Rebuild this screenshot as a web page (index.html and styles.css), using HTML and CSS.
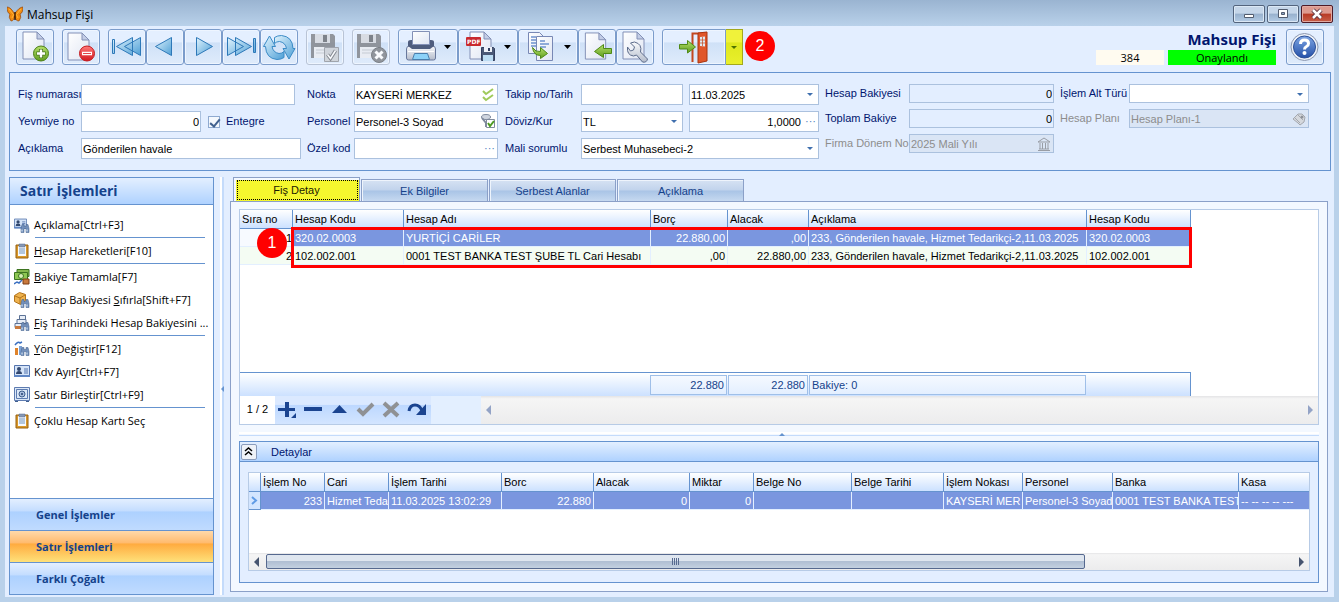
FILE: index.html
```
<!DOCTYPE html>
<html lang="tr">
<head>
    <meta charset="UTF-8">
    <meta name="viewport" content="width=device-width, initial-scale=1.0">
    <title>Mahsup Fişi</title>
    <link rel="stylesheet" href="styles.css">
</head>
<body>
    <!-- shared gradients and symbols -->
    <svg class="defs" width="0" height="0">
        <defs>
            <linearGradient id="gBlue" x1="0" y1="0" x2="1" y2="1"><stop offset="0" stop-color="#e2f4fd"/><stop offset="1" stop-color="#4d9fd6"/></linearGradient>
            <linearGradient id="gPage" x1="0" y1="0" x2="1" y2="1"><stop offset="0" stop-color="#ffffff"/><stop offset="1" stop-color="#dfe5f3"/></linearGradient>
            <linearGradient id="gGreen" x1="0" y1="0" x2="0" y2="1"><stop offset="0" stop-color="#b5e06a"/><stop offset="1" stop-color="#5f9d1e"/></linearGradient>
            <linearGradient id="gRed" x1="0" y1="0" x2="0" y2="1"><stop offset="0" stop-color="#ff7a7a"/><stop offset="1" stop-color="#d3181f"/></linearGradient>
            <linearGradient id="gHelp" x1="0" y1="0" x2="0" y2="1"><stop offset="0" stop-color="#7ea6e4"/><stop offset="1" stop-color="#2450a8"/></linearGradient>
            <linearGradient id="gGrey" x1="0" y1="0" x2="0" y2="1"><stop offset="0" stop-color="#fafbfd"/><stop offset="1" stop-color="#b4bccb"/></linearGradient>
            <symbol id="page" viewBox="0 0 24 30">
                <path d="M1 1h14l7 7v20H1z" fill="url(#gPage)" stroke="#8390b6"/>
                <path d="M15 1v7h7z" fill="#c3cde6" stroke="#8390b6"/>
            </symbol>
            <symbol id="disk" viewBox="0 0 24 24">
                <path d="M0 0h22l2 2v22H0z" fill="#84878d"/>
                <path d="M4 0h15v9H4z" fill="#d6d9df"/><path d="M12 1h4v7h-4z" fill="#6c6f76"/>
                <path d="M3 13h18v11H3z" fill="#eceef2"/><path d="M5 16h14M5 19h14" stroke="#c3c7ce"/>
            </symbol>
            <symbol id="clip" viewBox="0 0 16 16">
                <path d="M2 2h12v13H2z" fill="#d9982a" stroke="#98600f"/>
                <path d="M4 3h8v10H4z" fill="#f7fafe"/><path d="M5 1h6v3H5z" fill="#8698b5" stroke="#576a8d" stroke-width=".5"/>
                <path d="M5 6h6M5 8h6M5 10h6" stroke="#6f92bb"/>
            </symbol>
            <symbol id="bino" viewBox="0 0 10 8">
                <path d="M1 4 2 0h2v2h2V0h2l1 4v4H6V4H4v4H1z" fill="#7390bb" stroke="#3f5c88" stroke-width=".5"/>
                <path d="M2 5v2M7 5v2" stroke="#e3eefa"/>
            </symbol>
            <symbol id="card" viewBox="0 0 16 12">
                <path d="M.5.5h15v11H.5z" fill="#d5e4f8" stroke="#5474ad"/>
                <path d="M0 10h16v2H0z" fill="#5f86c4"/>
                <circle cx="5" cy="4" r="2" fill="#32486f"/><path d="M2 9q0-3 3-3t3 3z" fill="#32486f"/><path d="M10 4h4M10 6h4M10 8h4" stroke="#5474ad"/>
            </symbol>
        </defs>
    </svg>

    <header class="titlebar">
        <svg class="logo" width="16" height="16" viewBox="0 0 16 16">
            <path d="M7.500 8Q4 1 0 1q0 6 3 7-2 3 1 7 3 0 3.500-5 1 5 4.500 5 3-4 1-7 3-1 3-7-4 0-8.500 7z" fill="#f28c0f" stroke="#92430a" stroke-width=".7"/>
            <path d="M2 3l4 5M14 3l-4 5M5 12l2-4M11 12 9 8" stroke="#ffb53b"/><path d="M8 6v8" stroke="#3b1d05" stroke-width="1.500"/>
        </svg>
        <span class="caption">Mahsup Fişi</span>
        <button class="win" aria-label="Küçült"><svg width="30" height="16" viewBox="0 0 30 16"><path d="M10.500 8.500h9v3h-9z" fill="#fff" stroke="#525c6e"/></svg></button>
        <button class="win" aria-label="Büyüt"><svg width="30" height="16" viewBox="0 0 30 16"><path d="M10.500 3.500h9v8h-9z" fill="#fff" stroke="#525c6e"/><path d="M13.500 6.500h3v2h-3z" fill="#8fa6c4" stroke="#525c6e"/></svg></button>
        <button class="win close" aria-label="Kapat"><svg width="30" height="16" viewBox="0 0 30 16"><path d="M11 4l8 8M19 4l-8 8" stroke="#5b3440" stroke-width="4.500"/><path d="M11 4l8 8M19 4l-8 8" stroke="#fff" stroke-width="2.500"/></svg></button>
    </header>

    <div class="window">
        <div class="toolbar">
            <button class="tool" aria-label="Yeni"><svg viewBox="1 1 36 34"><use href="#page" x="6" y="2" width="24" height="30"/><circle cx="25" cy="24.500" r="7.500" fill="url(#gGreen)" stroke="#4c7f17"/><path d="M25 20v9M20.500 24.500h9" stroke="#3f6d13" stroke-width="4"/><path d="M25 20.500v8M21 24.500h8" stroke="#fff" stroke-width="2.500"/></svg></button>
            <button class="tool" aria-label="Sil"><svg viewBox="1 1 36 34"><use href="#page" x="5" y="3" width="24" height="30"/><circle cx="25" cy="24.500" r="7.500" fill="url(#gRed)" stroke="#c41b20"/><path d="M20 24.500h10" stroke="#fff" stroke-width="3.500"/><path d="M21 24.500h8" stroke="#e0474b"/></svg></button>
            <div class="group">
                <button class="tool" aria-label="İlk"><svg viewBox="1 1 36 34"><path d="M4.500 10.500h2v14h-2zM24.500 8.500v18l-16-9zM32.500 8.500v18l-16-9z" fill="url(#gBlue)" stroke="#2d78b8"/></svg></button>
                <button class="tool" aria-label="Önceki"><svg viewBox="1 1 36 34"><path d="M25.500 8.500v18l-16-9z" fill="url(#gBlue)" stroke="#2d78b8"/></svg></button>
                <button class="tool" aria-label="Sonraki"><svg viewBox="1 1 36 34"><path d="M12.500 8.500v18l16-9z" fill="url(#gBlue)" stroke="#2d78b8"/></svg></button>
                <button class="tool" aria-label="Son"><svg viewBox="1 1 36 34"><path d="M5.500 8.500v18l16-9zM13.500 8.500v18l16-9zM31.500 9.500h2v14h-2z" fill="url(#gBlue)" stroke="#2d78b8"/></svg></button>
                <button class="tool" aria-label="Yenile"><svg viewBox="1 1 36 34">
                    <path d="M3.500 17.500 9.500 7l6 10.500h-3.500q1 6 7 7 3 0 5-2v6q-3 2-7 2-11-1-11.500-13z" fill="url(#gBlue)" stroke="#3b8bc6"/>
                    <path d="M35 19.500 29 30l-6-10.500h3.500q-1-6-7-7-3 0-5 2V8.500q3-2 7-2 11 1 11.500 13z" fill="url(#gBlue)" stroke="#3b8bc6"/></svg></button>
            </div>
            <button class="tool off" aria-label="Kaydet" disabled><svg viewBox="1 1 36 34"><use href="#disk" x="5" y="5" width="24" height="24"/><path d="M18.500 18.500h14v14h-14z" fill="#cfd2d6" stroke="#96999f"/><path d="m21.500 25.500 3 4 5-8" fill="none" stroke="#777a80" stroke-width="3.500"/><path d="m21.500 25.500 3 4 5-8" fill="none" stroke="#fff" stroke-width="1.500"/></svg></button>
            <button class="tool off" aria-label="Vazgeç" disabled><svg viewBox="1 1 36 34"><use href="#disk" x="5" y="5" width="24" height="24"/><circle cx="27" cy="26" r="7.500" fill="#85888d" stroke="#6b6e73"/><path d="m23.500 22.500 7 7m0-7-7 7" stroke="#fff" stroke-width="3"/></svg></button>
            <div class="group">
                <button class="tool wide" aria-label="Yazdır"><svg viewBox="1 1 58 34">
                    <path d="M8.500 20q0-3 3-3h23q3 0 3 3v9q0 2-2 2h-25q-2 0-2-2z" fill="url(#gGrey)" stroke="#68789c"/>
                    <path d="M10 17v-4q0-2 3-2h20q3 0 3 2v4l-4 3H14z" fill="#4f5d7e"/>
                    <path d="M14.500 2.500h17v13h-17z" fill="url(#gPage)" stroke="#8390b6"/><path d="M10 22.500h26" stroke="#fff"/>
                    <path d="M16.500 24.500h13l2 6h-17z" fill="#8cd2f8" stroke="#497eac"/>
                    <path d="M46 16h7l-3.500 4z"/></svg></button>
                <button class="tool wide" aria-label="PDF"><svg viewBox="1 1 58 34">
                    <use href="#page" x="11" y="2" width="24" height="30"/>
                    <rect x="8" y="8" width="15" height="9" rx="1" fill="#c92a2d"/><text x="9" y="15" class="pdf">PDF</text>
                    <path d="M23.500 18.500h12l1 1v12h-13z" fill="#4a5876" stroke="#334061"/><path d="M26 18h8v5h-8z" fill="#eef2f9"/><path d="M31 19v3" stroke="#334061" stroke-width="2"/><path d="M25 26h10v6H25z" fill="#bcdcf3"/>
                    <path d="M46 16h7l-3.500 4z"/></svg></button>
                <button class="tool wide" aria-label="Kopyala"><svg viewBox="1 1 58 34">
                    <path d="M10.500 3.500h11l4 4v17h-15z" fill="url(#gPage)" stroke="#7888b5"/><path d="M13 8h5M13 11h8M13 14h5M13 17h5" stroke="#6f93ce" stroke-width="1.500"/>
                    <path d="M18.500 7.500h16v24h-16z" fill="url(#gPage)" stroke="#7888b5"/><path d="M22 12h5M22 15h9M22 18h6" stroke="#6f93ce" stroke-width="1.500"/>
                    <path d="M14.500 18.500q3 5 8 4v-4l7 6-7 5v-3q-7 0-8-8z" fill="url(#gGreen)" stroke="#4f8a16"/>
                    <path d="M46 16h7l-3.500 4z"/></svg></button>
                <button class="tool" aria-label="Aktar"><svg viewBox="1 1 36 34"><use href="#page" x="6" y="3" width="24" height="29"/><path d="M33.500 19.500h-8v-4l-9 7 9 6v-4h8z" fill="url(#gGreen)" stroke="#4f8a16"/></svg></button>
                <button class="tool" aria-label="Ayarlar"><svg viewBox="1 1 36 34"><use href="#page" x="6" y="2" width="24" height="30"/><path d="M14.500 14l4 4-1 3-3 1-3-4q-1 8 6 9l3-1 6 7q4 1 5-3l-7-7q2-8-6-10z" fill="url(#gGrey)" stroke="#5d6c8b"/></svg></button>
            </div>
            <div class="split">
                <button class="tool exit" aria-label="Çıkış"><svg viewBox="1 1 62 34">
                    <path d="M30.500 33V4.500h14" fill="none" stroke="#c2471f" stroke-width="2"/>
                    <path d="M36 4l9-1v29l-9 2z" fill="#e0562a" stroke="#a9340f"/><path d="M38 8l5-.500v10l-5-.500z" fill="#dfeaf2"/><path d="M40.500 8v9M38 11h5M38 14h5" stroke="#c2471f" stroke-width=".7"/>
                    <path d="M17.500 15.500h8v-4l8 6.500-8 6v-4h-8z" fill="url(#gGreen)" stroke="#4f8a16"/></svg></button>
                <button class="tool drop" aria-label="Çıkış seçenekleri"><svg viewBox="0 0 16 34"><path d="M5 16h6l-3 3z" fill="#4f7300"/></svg></button>
                <span class="badge">2</span>
            </div>
            <div class="status">
                <h1>Mahsup Fişi</h1>
                <div class="pills"><span class="num">384</span><span class="ok">Onaylandı</span></div>
            </div>
            <button class="tool" aria-label="Yardım"><svg viewBox="1 1 36 34"><circle cx="18.500" cy="18" r="13.500" fill="#eef2f8" stroke="#8a97b0"/><circle cx="18.500" cy="18" r="11" fill="url(#gHelp)" stroke="#2d4f96"/><path d="M14.500 15q0-4 4-4t4 3.500q0 2-2 3t-2 3" fill="none" stroke="#fff" stroke-width="3"/><circle cx="18.500" cy="24" r="2" fill="#fff"/></svg></button>
        </div>

        <form class="panel" onsubmit="return false">
            <div class="col c1">
                <div class="row"><label for="fisNo">Fiş numarası</label><input class="w214" type="text" id="fisNo"></div>
                <div class="row"><label for="yevmiye">Yevmiye no</label><input class="w120 right" type="text" id="yevmiye" value="0"><input type="checkbox" id="entegre" checked><label class="auto" for="entegre">Entegre</label></div>
                <div class="row"><label for="aciklama">Açıklama</label><input type="text" id="aciklama" value="Gönderilen havale"></div>
            </div>
            <div class="col c2">
                <div class="row"><label for="nokta">Nokta</label><div class="box"><input type="text" id="nokta" value="KAYSERİ MERKEZ"><svg class="ic" width="14" height="16" viewBox="0 0 14 16"><path d="m2 4 3 3 7-5M2 10l3 3 7-5" fill="none" stroke="#9fca5a" stroke-width="2"/></svg></div></div>
                <div class="row"><label for="personel">Personel</label><div class="box"><input type="text" id="personel" value="Personel-3 Soyad"><svg class="ic" width="14" height="14" viewBox="0 0 14 14"><ellipse cx="5" cy="3" rx="4.500" ry="2.500" fill="#cfd5df" stroke="#7f8a9d"/><path d="m1 4 4 5v4" fill="none" stroke="#7f8a9d" stroke-width="2"/><path d="M5.500 5.500h8v8h-8z" fill="#fff" stroke="#7f8a9d"/><path d="m7 9 2 3 4-5" fill="none" stroke="#4d9b21" stroke-width="2"/></svg></div></div>
                <div class="row"><label for="ozelKod">Özel kod</label><div class="box"><input type="text" id="ozelKod"><button class="dots" aria-label="Seç">···</button></div></div>
            </div>
            <div class="col c3">
                <div class="row"><label for="takip">Takip no/Tarih</label><input class="w102" type="text" id="takip"><div class="box arrow"><select id="tarih" aria-label="Tarih"><option>11.03.2025</option></select></div></div>
                <div class="row"><label for="doviz">Döviz/Kur</label><div class="box arrow w102"><select id="doviz"><option>TL</option></select></div><div class="box"><input class="right kur" type="text" id="kur" aria-label="Kur" value="1,0000"><button class="dots" aria-label="Seç">···</button></div></div>
                <div class="row"><label for="mali">Mali sorumlu</label><div class="box arrow"><select id="mali"><option>Serbest Muhasebeci-2</option></select></div></div>
            </div>
            <div class="col c4 low">
                <div class="row"><label for="hesapBak">Hesap Bakiyesi</label><input class="right ro" type="text" id="hesapBak" value="0" readonly></div>
                <div class="row"><label for="toplamBak">Toplam Bakiye</label><input class="right ro" type="text" id="toplamBak" value="0" readonly></div>
                <div class="row dim"><label for="donem">Firma Dönem No</label><div class="box"><input type="text" id="donem" value="2025 Mali Yılı" disabled><svg class="ic" width="14" height="14" viewBox="0 0 14 14"><path d="M1 5h12L7 1zM2 12h10M1 13.500h12M3 6v6M5.500 6v6M8.500 6v6M11 6v6" fill="none" stroke="#999da5"/></svg></div></div>
            </div>
            <div class="col c5 low">
                <div class="row"><label for="altTur">İşlem Alt Türü</label><div class="box arrow"><select id="altTur"><option></option></select></div></div>
                <div class="row dim"><label for="plan">Hesap Planı</label><div class="box"><input type="text" id="plan" value="Hesap Planı-1" disabled><svg class="ic" width="14" height="14" viewBox="0 0 14 14"><path d="m1 7 5-5h4l3 3-1 5-4 3-2-2z" fill="#d5d8dd" stroke="#a3a7ae"/><path d="m3 6 5 5M6 3l5 5" stroke="#a3a7ae"/><circle cx="10" cy="5" r="1.500" fill="#8d9198"/></svg></div></div>
            </div>
        </form>

        <div class="content">
            <aside class="side">
                <h2>Satır İşlemleri</h2>
                <nav>
                    <a href="#" class="end"><svg viewBox="0 0 16 16"><use href="#card" width="13" height="13"/><use href="#bino" x="6" y="7" width="10" height="9"/></svg><span>Açıklama[Ctrl+F3]</span></a>
                    <a href="#" class="end"><svg viewBox="0 0 16 16"><use href="#clip" width="16" height="16"/></svg><span><u>H</u>esap Hareketleri[F10]</span></a>
                    <a href="#"><svg viewBox="0 0 16 16"><path d="M3 .5h12v7H3z" fill="#86b94e" stroke="#3d7420"/><path d="M.5 3.500h13v7H.5z" fill="#8ec852" stroke="#3d7420"/><circle cx="7" cy="7" r="2.500" fill="#d9efb5" stroke="#3d7420"/><path d="m0 15 3-2 2 1 3-3" fill="none" stroke="#3a6fc0" stroke-width="1.500"/><path d="M9 10h6v5H9z" fill="#c9793c" stroke="#7c3d14"/></svg><span><u>B</u>akiye Tamamla[F7]</span></a>
                    <a href="#"><svg viewBox="0 0 16 16"><path d="m.5 3.500 5-3 6 2v6l-5 4-6-3z" fill="#eeb24d" stroke="#b4741b"/><path d="m1 4 5 2 5-3M6 6v6" fill="none" stroke="#b4741b"/><use href="#bino" x="6" y="7" width="10" height="9"/></svg><span>Hesap Bakiyesi <u>S</u>ıfırla[Shift+F7]</span></a>
                    <a href="#"><svg viewBox="0 0 16 16"><path d="M5.500.5h6v4h-6zM3 4.500h9v4H3zM1 8.500h8v4H1z" fill="#e8eef7" stroke="#5d7396"/><path d="M1 11h6v3H1z" fill="#c9793c"/><use href="#bino" x="6" y="7" width="10" height="9"/></svg><span><u>F</u>iş Tarihindeki Hesap Bakiyesini ...</span></a>
                    <a href="#" class="end gap"><svg viewBox="0 0 16 16"><path d="M1 4q3-4 5-2l2-1" fill="none" stroke="#3a6fc0" stroke-width="1.500"/><path d="M1 7h3v7H1z" fill="#e0832a"/><path d="M5 5h3v9H5z" fill="#7ba1d3"/><use href="#bino" x="6" y="6" width="10" height="9"/></svg><span><u>Y</u>ön Değiştir[F12]</span></a>
                    <a href="#"><svg viewBox="0 0 16 16"><use href="#card" y="1" width="16" height="12"/></svg><span>Kdv Ayır[Ctrl+F7]</span></a>
                    <a href="#" class="end"><svg viewBox="0 0 16 16"><path d="M.5.5h15v13H.5zM2.500 2.500h11v9h-11z" fill="#dce8f7" stroke="#5d7bb0"/><circle cx="8" cy="7" r="3" fill="#a9bddd" stroke="#41608f"/><circle cx="8" cy="7" r="1" fill="#23406f"/><path d="M1 14.500h3M12 14.500h3" stroke="#41608f"/></svg><span>Satır Birleştir[Ctrl+F9]</span></a>
                    <a href="#"><svg viewBox="0 0 16 16"><use href="#clip" width="16" height="16"/></svg><span>Çoklu Hesap Kartı Seç</span></a>
                </nav>
                <button class="grp">Genel İşlemler</button>
                <button class="grp active">Satır İşlemleri</button>
                <button class="grp">Farklı Çoğalt</button>
            </aside>
            <div class="vsplit"></div>

            <main>
                <div class="tabs">
                    <button class="tab active">Fiş Detay</button>
                    <button class="tab">Ek Bilgiler</button>
                    <button class="tab">Serbest Alanlar</button>
                    <button class="tab">Açıklama</button>
                </div>
                <div class="tabpage">
                    <section class="grid">
                        <div class="rows">
                            <table class="lines">
                                <colgroup><col class="k1"><col class="k2"><col class="k3"><col class="k4"><col class="k5"><col class="k6"><col class="k7"></colgroup>
                                <thead><tr><th>Sıra no</th><th>Hesap Kodu</th><th>Hesap Adı</th><th>Borç</th><th>Alacak</th><th>Açıklama</th><th>Hesap Kodu</th></tr></thead>
                                <tbody>
                                    <tr class="sel"><td class="r no">1</td><td>320.02.0003</td><td>YURTİÇİ CARİLER</td><td class="r">22.880,00</td><td class="r">,00</td><td>233, Gönderilen havale, Hizmet Tedarikçi-2,11.03.2025</td><td>320.02.0003</td></tr>
                                    <tr class="alt"><td class="r no">2</td><td>102.002.001</td><td>0001 TEST BANKA TEST ŞUBE TL Cari Hesabı</td><td class="r">,00</td><td class="r">22.880,00</td><td>233, Gönderilen havale, Hizmet Tedarikçi-2,11.03.2025</td><td>102.002.001</td></tr>
                                </tbody>
                            </table>
                            <div class="marker"></div>
                            <span class="badge one">1</span>
                        </div>
                        <div class="totals"><span class="t1">22.880</span><span class="t2">22.880</span><span class="t3">Bakiye: 0</span></div>
                        <div class="navrow">
                            <span class="pos">1 / 2</span>
                            <div class="nav">
                                <button aria-label="Ekle"><svg viewBox="0 0 26 26"><path d="M10 5h4v6h6v3h-6v6h-4v-6H3v-3h7zM21 16v5h-5z" fill="#1b4490"/></svg></button>
                                <button aria-label="Çıkar"><svg viewBox="0 0 26 26"><path d="M3 10h18v4H3z" fill="#1b4490"/></svg></button>
                                <button aria-label="Yukarı"><svg viewBox="0 0 26 26"><path d="M5 16h15l-7.500-8z" fill="#1b4490"/></svg></button>
                                <button aria-label="Onayla"><svg viewBox="0 0 26 26"><path d="m5 12 5 5 10-10" fill="none" stroke="#8f9194" stroke-width="4"/></svg></button>
                                <button aria-label="İptal"><svg viewBox="0 0 26 26"><path d="m5 6 14 13M19 6 5 19" stroke="#8f9194" stroke-width="4"/></svg></button>
                                <button aria-label="Geri al"><svg viewBox="0 0 26 26"><path d="M4 14q1-6 6-6t7 6" fill="none" stroke="#1b4490" stroke-width="3"/><path d="M21 7v11H11z" fill="#1b4490"/></svg></button>
                            </div>
                            <div class="hscroll pale"><i class="lt"></i><i class="gt"></i></div>
                        </div>
                    </section>
                    <div class="hsplit"></div>
                    <section class="details">
                        <header><button aria-label="Daralt"><svg width="13" height="13" viewBox="0 0 13 13"><path d="m3 6 3.500-3L10 6M3 10l3.500-3 3.500 3" fill="none" stroke="#000" stroke-width="1.500"/></svg></button><span>Detaylar</span></header>
                        <div class="sub">
                            <table>
                                <colgroup><col class="d0"><col class="d1"><col class="d1"><col class="d3"><col class="d4"><col class="d5"><col class="d1"><col class="d7"><col class="d4"><col class="d9"><col class="d10"><col class="d11"><col></colgroup>
                                <thead><tr><th></th><th>İşlem No</th><th>Cari</th><th>İşlem Tarihi</th><th>Borc</th><th>Alacak</th><th>Miktar</th><th>Belge No</th><th>Belge Tarihi</th><th>İşlem Nokası</th><th>Personel</th><th>Banka</th><th>Kasa</th></tr></thead>
                                <tbody><tr class="sel"><td class="ind"><svg width="8" height="9" viewBox="0 0 8 9"><path d="m2 1 4 3.500L2 8" fill="none" stroke="#5f9be6" stroke-width="2"/></svg></td><td class="r">233</td><td>Hizmet Teda</td><td>11.03.2025 13:02:29</td><td class="r">22.880</td><td class="r">0</td><td class="r">0</td><td></td><td></td><td>KAYSERİ MER</td><td>Personel-3 Soyad</td><td>0001 TEST BANKA TEST</td><td>-- -- -- -- ---</td></tr></tbody>
                            </table>
                            <div class="hscroll"><i class="lt"></i><div class="thumb"></div><i class="gt"></i></div>
                        </div>
                    </section>
                </div>
            </main>
        </div>
    </div>
</body>
</html>
```
FILE: styles.css
```
*{
    box-sizing: border-box;
}
body{
    margin: 0;
    min-height: 100vh;
    display: flex;
    flex-direction: column;
    padding: 0 5px 5px;
    background: #b9d1ea;
    font: 11px "Liberation Sans", Arial, sans-serif;
    color: #000;
}
button, input, select{
    font: inherit;
    color: inherit;
    margin: 0;
    padding: 0;
    border-radius: 0;
}
svg{
    display: block;
}
.defs{
    position: absolute;
}
h1, h2{
    margin: 0;
}

/* title bar */
.titlebar{
    display: flex;
    align-items: center;
    gap: 2px;
    height: 26px;
    margin: 0 -5px;
    padding: 2px 6px 0 7px;
    background: linear-gradient(#9ab4d1, #b9d1ea);
    font: 12px "Open Sans", "Noto Sans", sans-serif;
}
.caption{
    flex: 1;
    padding: 1px 0 0 2px;
}
.win{
    width: 32px;
    height: 18px;
    border: 1px solid #53647d;
    border-radius: 2px;
    background: linear-gradient(#c5d6e9 45%, #98b1cd 50%, #b4cce6);
    box-shadow: inset 0 0 0 1px #dbe8f5;
}
.close{
    border-color: #4e1a26;
    background: linear-gradient(#dd9a8f 45%, #b83a25 50%, #c8604a);
    box-shadow: inset 0 0 0 1px #e2aaa2;
}

.window{
    flex: 1;
    display: flex;
    flex-direction: column;
    background: #e3eeff;
    padding: 3px 3px 2px 4px;
}

/* toolbar */
.toolbar{
    display: flex;
    gap: 8px;
    padding: 0 7px;
}
.group, .split{
    display: flex;
    position: relative;
}
.tool{
    width: 38px;
    height: 36px;
    border: 1px solid #7b9ccb;
    border-radius: 3px;
    background: linear-gradient(#e4efff 35%, #cfe1f7 38%, #dfebfb);
    box-shadow: inset 0 0 0 1px #eef5ff;
}
.tool svg{
    width: 100%;
    height: 34px;
}
.off{
    border-color: #b9c4d6;
}
.off svg{
    opacity: .85;
}
.wide{
    width: 60px;
}
.exit{
    width: 64px;
    border-radius: 3px 0 0 3px;
}
.drop{
    width: 17px;
    border-color: #a3a81c;
    border-left: 0;
    border-radius: 0;
    background: linear-gradient(#f0f23a 35%, #dfe81e 38%, #e9ef2c);
    box-shadow: none;
}
.pdf{
    font: bold 6px "DejaVu Sans", sans-serif;
    fill: #fff;
}
.badge{
    position: absolute;
    right: -32px;
    top: 2px;
    width: 30px;
    height: 30px;
    border-radius: 50%;
    background: #f00;
    color: #fff;
    font-size: 16px;
    line-height: 30px;
    text-align: center;
}
.status{
    margin-left: auto;
    margin-right: 2px;
    text-align: right;
    color: #00156e;
}
.status h1{
    font: bold 15px/21px "Open Sans", "Noto Sans", sans-serif;
}
.pills{
    display: flex;
    gap: 4px;
    font: 11px/15px "Open Sans", "Noto Sans", sans-serif;
    text-align: center;
    color: #000;
}
.num{
    width: 68px;
    background: #fffbf0;
}
.ok{
    width: 108px;
    background: #0f0;
}

/* form */
.panel{
    display: flex;
    gap: 6px;
    margin-top: 7px;
    padding: 11px 21px 11px 8px;
    border: 1px solid #6593cf;
    color: #00156e;
}
.col{
    display: flex;
    flex-direction: column;
    gap: 6px;
}
.row{
    display: flex;
    height: 21px;
    gap: 6px;
}
.row > label{
    flex-shrink: 0;
    line-height: 20px;
    white-space: nowrap;
    margin-right: -6px;
}
.low .row{
    height: 19px;
}
.low .row > label{
    line-height: 18px;
}
.row input, .row select{
    flex: 1;
    min-width: 0;
    height: 100%;
    padding: 0 1px;
    border: 1px solid #abc1de;
    background: #fff;
    color: #000;
    outline: none;
}
.row select{
    appearance: none;
    width: 100%;
}
.box{
    position: relative;
    flex: 1;
    min-width: 0;
    display: flex;
}
.arrow::after{
    content: "";
    position: absolute;
    right: 6px;
    top: 9px;
    border: 3px solid transparent;
    border-top-color: #3f6fae;
    pointer-events: none;
}
.ic{
    position: absolute;
    right: 3px;
    top: 3px;
}
.dots{
    position: absolute;
    right: 3px;
    top: 1px;
    height: 18px;
    border: 0;
    background: none;
    color: #4f7fc0;
}
.c1{ width: 283px; }
.c1 label{ width: 63px; }
.c2{ width: 191px; }
.c2 label{ width: 47px; }
.c3{ width: 314px; margin-left: 1px; }
.c3 label{ width: 76px; }
.c4{ width: 229px; }
.c4 label{ width: 84px; }
.c5{ flex: 1; }
.c5 label{ width: 69px; }
.row .w214{ flex: 0 0 214px; }
.row .w120{ flex: 0 0 120px; }
.row .w102{ flex: 0 0 102px; }
.row .auto{ width: auto; }
.row .right{ text-align: right; }
.row .kur{ padding-right: 17px; }
.row .ro{ background: #e3eeff; }
.row.dim{
    color: #8d8d8d;
}
.row.dim input{
    background: #dae5f5;
    color: #8d8d8d;
}
.row input[type=checkbox]{
    appearance: none;
    flex: 0 0 12px;
    height: 12px;
    margin: 5px 0 0 1px;
    border: 1px solid #8faad0;
    background: #f4f8fd;
    position: relative;
}
.row input[type=checkbox]:checked::after{
    content: "";
    position: absolute;
    left: 3px;
    top: 0;
    width: 4px;
    height: 8px;
    border: solid #41618f;
    border-width: 0 2px 2px 0;
    transform: rotate(40deg);
}

/* left side */
.content{
    flex: 1;
    display: flex;
    margin-top: 6px;
}
.side{
    width: 205px;
    flex-shrink: 0;
    display: flex;
    flex-direction: column;
    border: 1px solid #6593cf;
    background: #fff;
    font: 11px "Open Sans", "Noto Sans", sans-serif;
}
.side h2{
    height: 27px;
    padding-left: 10px;
    border-bottom: 1px solid #6593cf;
    background: linear-gradient(#e3efff, #afd2ff);
    color: #15428b;
    font-size: 14px;
    line-height: 25px;
}
.side nav{
    flex: 1;
    padding-top: 8px;
}
.side nav a{
    display: flex;
    align-items: center;
    gap: 4px;
    height: 23px;
    padding-left: 4px;
    color: #000;
    text-decoration: none;
    white-space: nowrap;
}
.side nav a svg{
    width: 16px;
    height: 16px;
}
.side .end{
    position: relative;
    margin-bottom: 3px;
}
.side .end::after{
    content: "";
    position: absolute;
    left: 25px;
    right: 8px;
    bottom: -2px;
    border-top: 1px solid #6593cf;
}
.side .gap{
    margin: 3px 0 0;
}
.side .gap::after{
    top: -2px;
    bottom: auto;
}
.grp{
    height: 32px;
    padding-left: 26px;
    border: 0;
    border-top: 1px solid #6593cf;
    background: linear-gradient(#e3efff, #c4ddff 38%, #add1ff 42%, #c0dbff);
    color: #15428b;
    font-weight: bold;
    text-align: left;
}
.grp.active{
    background: linear-gradient(#ffd9aa, #ffbb6e 38%, #ffab3f 42%, #fee17a);
}
.vsplit{
    position: relative;
    width: 4px;
    margin: 0 5px 0 6px;
    border-left: 2px solid #fff;
    background: #c4dbfb;
}
.vsplit::after{
    content: "";
    position: absolute;
    left: -4px;
    top: 50%;
    border: 3px solid transparent;
    border-right-color: #6593cf;
}

/* tabs */
main{
    flex: 1;
    min-width: 0;
    display: flex;
    flex-direction: column;
    padding-bottom: 3px;
    margin-left: 1px;
    margin-right: 3px;
}
.tabs{
    display: flex;
    align-items: flex-end;
    gap: 1px;
    padding-left: 3px;
}
.tab{
    width: 127px;
    height: 22px;
    border: 1px solid #8ba0c8;
    border-bottom: 0;
    background: linear-gradient(#d6e2f3, #c1d3ec 48%, #a9c4e6 52%, #c6d9f0);
    box-shadow: inset 1px 1px #eef4fc;
    color: #15428b;
}
.tab.active{
    position: relative;
    height: 24px;
    border-color: #8ba0c8;
    background: #f5f72e;
    box-shadow: inset 2px 2px #f3f8ff;
    color: #1a1a00;
}
.tab.active::after{
    content: "";
    position: absolute;
    inset: 2px 1px 1px 3px;
    border: 1px dotted #000;
}
.tabpage{
    flex: 1;
    display: flex;
    flex-direction: column;
    padding: 7px 8px 8px;
    border: 1px solid #8ba0c8;
    background: #f3f8ff;
}

/* grids */
.grid{
    flex: 1;
    display: flex;
    flex-direction: column;
    border: 1px solid #b7cbe6;
    background: #fff;
}
.rows{
    flex: 1;
    position: relative;
}
table{
    table-layout: fixed;
    border-collapse: separate;
    border-spacing: 0;
}
th, td{
    height: 18px;
    padding: 0 2px;
    overflow: hidden;
    text-align: left;
    font-weight: normal;
    white-space: nowrap;
}
th{
    height: 19px;
    border-right: 1px solid #6593cf;
    border-bottom: 1px solid #6593cf;
    background: linear-gradient(#fff, #cce1ff);
}
td{
    border-right: 1px solid #e3efff;
    border-bottom: 1px solid #e3efff;
}
.sel td{
    background: #7a96df;
    color: #fff;
}
.alt td{
    background: #f4fcf3;
}
.lines .no{
    padding-right: 0;
    color: #000;
}
.sel .no{
    background: #f7faff;
}
.r{
    text-align: right;
}
.lines{ width: 951px; }
.k1{ width: 53px; }
.k2{ width: 111px; }
.k3{ width: 247px; }
.k4{ width: 77px; }
.k5{ width: 81px; }
.k6{ width: 278px; }
.k7{ width: 104px; }
.marker{
    position: absolute;
    left: 51px;
    top: 17px;
    width: 901px;
    height: 41px;
    border: 3px solid #f00;
}
.one{
    left: 17px;
    top: 18px;
    right: auto;
}
.totals{
    display: flex;
    gap: 1px;
    width: 951px;
    height: 24px;
    padding: 2px 0 0 410px;
    border-top: 1px solid #6593cf;
    border-right: 1px solid #6593cf;
    background: linear-gradient(#fff, #cce1ff);
    color: #15428b;
}
.totals span{
    height: 20px;
    padding: 0 2px;
    border: 1px solid #9fbfe8;
    background: linear-gradient(#f5f9ff, #e3efff);
    line-height: 19px;
    text-align: right;
}
.totals .t1{ width: 77px; }
.totals .t2{ width: 80px; }
.totals .t3{ width: 277px; text-align: left; }
.navrow{
    display: flex;
    height: 28px;
    background: #e3efff;
}
.pos{
    width: 35px;
    background: #fff;
    line-height: 27px;
    text-align: center;
}
.nav{
    display: flex;
    margin-right: 50px;
    background: linear-gradient(#dbe9ff 30%, #bdd8ff 34%, #d3e5ff);
}
.nav button{
    width: 26px;
    border: 0;
    background: none;
}
.nav svg{
    width: 26px;
    height: 26px;
}
.hscroll{
    flex: 1;
    display: flex;
    align-items: center;
    justify-content: space-between;
    padding: 0 5px;
    background: linear-gradient(#e4e4e6, #f5f5f5 10%, #ececed);
}
.lt, .gt{
    border: 5px solid transparent;
}
.lt{
    border-left: 0;
    border-right-color: #46546f;
}
.gt{
    border-right: 0;
    border-left-color: #46546f;
}
.pale .lt{ border-right-color: #93a3c6; }
.pale .gt{ border-left-color: #93a3c6; }
.hsplit{
    position: relative;
    height: 4px;
    margin: 7px 0 5px;
    border-top: 2px solid #fff;
    border-bottom: 1px solid #c4dbfb;
}
.hsplit::after{
    content: "";
    position: absolute;
    left: 50%;
    bottom: -1px;
    border: 3px solid transparent;
    border-bottom-color: #6593cf;
}

/* details */
.details{
    border: 1px solid #6593cf;
    background: #e3eeff;
}
.details header{
    display: flex;
    align-items: center;
    gap: 14px;
    height: 20px;
    padding-left: 1px;
    border-bottom: 1px solid #6593cf;
    background: linear-gradient(#e3efff, #afd2ff);
    color: #00156e;
}
.details header button{
    width: 16px;
    height: 16px;
    border: 1px solid #8a9cbc;
    border-radius: 2px;
    background: #eef2f8;
}
.sub{
    display: flex;
    flex-direction: column;
    margin: 10px 8px 11px;
    border: 1px solid #b7cbe6;
    background: #fff;
}
.sub table{
    width: 100%;
    margin-bottom: 43px;
}
.sub tr > :last-child{
    border-right: 0;
}
.sub .ind{
    padding: 0 1px;
    background: #d3e5ff;
    border-color: #6593cf;
}
.d0{ width: 12px; }
.d1{ width: 64px; }
.d3{ width: 113px; }
.d4{ width: 92px; }
.d5{ width: 96px; }
.d7{ width: 98px; }
.d9{ width: 79px; }
.d10{ width: 90px; }
.d11{ width: 126px; }
.sub .hscroll{
    flex: 0 0 17px;
    gap: 7px;
}
.thumb{
    width: 78%;
    height: 15px;
    margin-right: auto;
    border: 1px solid #56698f;
    border-radius: 2px;
    background: repeating-linear-gradient(90deg, #56698f 0 1px, transparent 1px 2px) center / 7px 7px no-repeat, linear-gradient(#dfe6ef 45%, #b0bfd3 50%, #c3d0e0);
}
```
